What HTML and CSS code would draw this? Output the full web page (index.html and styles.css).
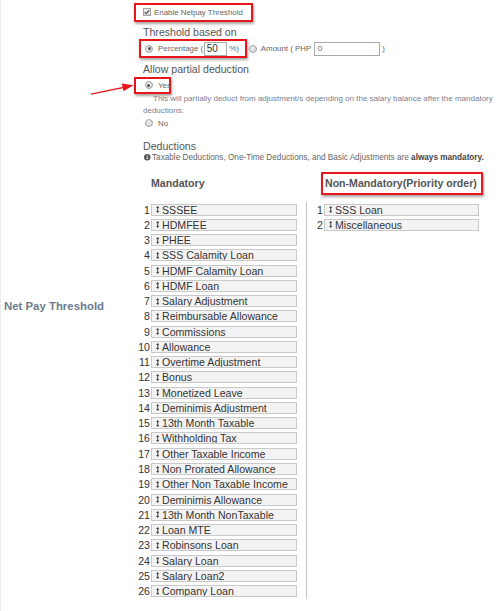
FILE: index.html
```html
<!DOCTYPE html>
<html>
<head>
<meta charset="utf-8">
<title>Net Pay Threshold</title>
<link rel="stylesheet" href="styles.css">
</head>
<body>
<div class="page">
  <div class="form-row">
    <div class="row-label">Net Pay Threshold</div>
    <div class="row-body">
      <div class="line-enable">
        <label class="annot annot-enable">
          <span class="cb"><svg viewBox="0 0 8 8" width="6" height="6"><path d="M1 4.2 L3 6.2 L7 1.5" fill="none" stroke="#555" stroke-width="1.5"/></svg></span>
          <span class="small enable-text">Enable Netpay Threshold</span>
        </label>
      </div>
      <div class="heading">Threshold based on</div>
      <div class="line-basis">
        <span class="annot annot-basis">
          <span class="radio checked"></span>
          <span class="small lbl-pct">Percentage (</span>
          <span class="input input-pct">50</span>
          <span class="small lbl-close">%)</span>
        </span>
        <span class="radio radio-amt"></span>
        <span class="small lbl-amt">Amount ( PHP</span>
        <span class="input input-amt">0</span>
        <span class="small lbl-close2">)</span>
      </div>
      <div class="heading heading-partial">Allow partial deduction</div>
      <div class="line-yes">
        <span class="annot annot-yes">
          <span class="radio checked"></span>
          <span class="small lbl-yes">Yes</span>
        </span>
      </div>
      <p class="help">This will partially deduct from adjustment/s depending on the salary balance after the mandatory deductions.</p>
      <div class="line-no">
        <span class="radio radio-no"></span>
        <span class="small lbl-no">No</span>
      </div>
      <div class="heading heading-deductions">Deductions</div>
      <div class="info">
        <svg class="info-icon" viewBox="0 0 10 10" width="6.5" height="6.5"><circle cx="5" cy="5" r="5" fill="#555"/><rect x="4.2" y="4.2" width="1.6" height="3.8" fill="#fff"/><rect x="4.2" y="2" width="1.6" height="1.5" fill="#fff"/></svg>
        <span>Taxable Deductions, One-Time Deductions, and Basic Adjustments are <b>always mandatory.</b></span>
      </div>
      <div class="columns">
        <div class="col-head mand-head">Mandatory</div>
        <div class="col-head nonmand-head"><span class="annot annot-head">Non-Mandatory(Priority order)</span></div>
        <ol class="sort-list list-left">
          <li><span class="num">1</span><span class="box"><svg class="sort" viewBox="0 0 4 8" width="3.5" height="7"><path d="M2 0 L4 2.4 H0 Z M2 8 L0 5.6 H4 Z M1.4 2 H2.6 V6 H1.4 Z" fill="#444"/></svg>SSSEE</span></li>
          <li><span class="num">2</span><span class="box"><svg class="sort" viewBox="0 0 4 8" width="3.5" height="7"><path d="M2 0 L4 2.4 H0 Z M2 8 L0 5.6 H4 Z M1.4 2 H2.6 V6 H1.4 Z" fill="#444"/></svg>HDMFEE</span></li>
          <li><span class="num">3</span><span class="box"><svg class="sort" viewBox="0 0 4 8" width="3.5" height="7"><path d="M2 0 L4 2.4 H0 Z M2 8 L0 5.6 H4 Z M1.4 2 H2.6 V6 H1.4 Z" fill="#444"/></svg>PHEE</span></li>
          <li><span class="num">4</span><span class="box"><svg class="sort" viewBox="0 0 4 8" width="3.5" height="7"><path d="M2 0 L4 2.4 H0 Z M2 8 L0 5.6 H4 Z M1.4 2 H2.6 V6 H1.4 Z" fill="#444"/></svg>SSS Calamity Loan</span></li>
          <li><span class="num">5</span><span class="box"><svg class="sort" viewBox="0 0 4 8" width="3.5" height="7"><path d="M2 0 L4 2.4 H0 Z M2 8 L0 5.6 H4 Z M1.4 2 H2.6 V6 H1.4 Z" fill="#444"/></svg>HDMF Calamity Loan</span></li>
          <li><span class="num">6</span><span class="box"><svg class="sort" viewBox="0 0 4 8" width="3.5" height="7"><path d="M2 0 L4 2.4 H0 Z M2 8 L0 5.6 H4 Z M1.4 2 H2.6 V6 H1.4 Z" fill="#444"/></svg>HDMF Loan</span></li>
          <li><span class="num">7</span><span class="box"><svg class="sort" viewBox="0 0 4 8" width="3.5" height="7"><path d="M2 0 L4 2.4 H0 Z M2 8 L0 5.6 H4 Z M1.4 2 H2.6 V6 H1.4 Z" fill="#444"/></svg>Salary Adjustment</span></li>
          <li><span class="num">8</span><span class="box"><svg class="sort" viewBox="0 0 4 8" width="3.5" height="7"><path d="M2 0 L4 2.4 H0 Z M2 8 L0 5.6 H4 Z M1.4 2 H2.6 V6 H1.4 Z" fill="#444"/></svg>Reimbursable Allowance</span></li>
          <li><span class="num">9</span><span class="box"><svg class="sort" viewBox="0 0 4 8" width="3.5" height="7"><path d="M2 0 L4 2.4 H0 Z M2 8 L0 5.6 H4 Z M1.4 2 H2.6 V6 H1.4 Z" fill="#444"/></svg>Commissions</span></li>
          <li><span class="num">10</span><span class="box"><svg class="sort" viewBox="0 0 4 8" width="3.5" height="7"><path d="M2 0 L4 2.4 H0 Z M2 8 L0 5.6 H4 Z M1.4 2 H2.6 V6 H1.4 Z" fill="#444"/></svg>Allowance</span></li>
          <li><span class="num">11</span><span class="box"><svg class="sort" viewBox="0 0 4 8" width="3.5" height="7"><path d="M2 0 L4 2.4 H0 Z M2 8 L0 5.6 H4 Z M1.4 2 H2.6 V6 H1.4 Z" fill="#444"/></svg>Overtime Adjustment</span></li>
          <li><span class="num">12</span><span class="box"><svg class="sort" viewBox="0 0 4 8" width="3.5" height="7"><path d="M2 0 L4 2.4 H0 Z M2 8 L0 5.6 H4 Z M1.4 2 H2.6 V6 H1.4 Z" fill="#444"/></svg>Bonus</span></li>
          <li><span class="num">13</span><span class="box"><svg class="sort" viewBox="0 0 4 8" width="3.5" height="7"><path d="M2 0 L4 2.4 H0 Z M2 8 L0 5.6 H4 Z M1.4 2 H2.6 V6 H1.4 Z" fill="#444"/></svg>Monetized Leave</span></li>
          <li><span class="num">14</span><span class="box"><svg class="sort" viewBox="0 0 4 8" width="3.5" height="7"><path d="M2 0 L4 2.4 H0 Z M2 8 L0 5.6 H4 Z M1.4 2 H2.6 V6 H1.4 Z" fill="#444"/></svg>Deminimis Adjustment</span></li>
          <li><span class="num">15</span><span class="box"><svg class="sort" viewBox="0 0 4 8" width="3.5" height="7"><path d="M2 0 L4 2.4 H0 Z M2 8 L0 5.6 H4 Z M1.4 2 H2.6 V6 H1.4 Z" fill="#444"/></svg>13th Month Taxable</span></li>
          <li><span class="num">16</span><span class="box"><svg class="sort" viewBox="0 0 4 8" width="3.5" height="7"><path d="M2 0 L4 2.4 H0 Z M2 8 L0 5.6 H4 Z M1.4 2 H2.6 V6 H1.4 Z" fill="#444"/></svg>Withholding Tax</span></li>
          <li><span class="num">17</span><span class="box"><svg class="sort" viewBox="0 0 4 8" width="3.5" height="7"><path d="M2 0 L4 2.4 H0 Z M2 8 L0 5.6 H4 Z M1.4 2 H2.6 V6 H1.4 Z" fill="#444"/></svg>Other Taxable Income</span></li>
          <li><span class="num">18</span><span class="box"><svg class="sort" viewBox="0 0 4 8" width="3.5" height="7"><path d="M2 0 L4 2.4 H0 Z M2 8 L0 5.6 H4 Z M1.4 2 H2.6 V6 H1.4 Z" fill="#444"/></svg>Non Prorated Allowance</span></li>
          <li><span class="num">19</span><span class="box"><svg class="sort" viewBox="0 0 4 8" width="3.5" height="7"><path d="M2 0 L4 2.4 H0 Z M2 8 L0 5.6 H4 Z M1.4 2 H2.6 V6 H1.4 Z" fill="#444"/></svg>Other Non Taxable Income</span></li>
          <li><span class="num">20</span><span class="box"><svg class="sort" viewBox="0 0 4 8" width="3.5" height="7"><path d="M2 0 L4 2.4 H0 Z M2 8 L0 5.6 H4 Z M1.4 2 H2.6 V6 H1.4 Z" fill="#444"/></svg>Deminimis Allowance</span></li>
          <li><span class="num">21</span><span class="box"><svg class="sort" viewBox="0 0 4 8" width="3.5" height="7"><path d="M2 0 L4 2.4 H0 Z M2 8 L0 5.6 H4 Z M1.4 2 H2.6 V6 H1.4 Z" fill="#444"/></svg>13th Month NonTaxable</span></li>
          <li><span class="num">22</span><span class="box"><svg class="sort" viewBox="0 0 4 8" width="3.5" height="7"><path d="M2 0 L4 2.4 H0 Z M2 8 L0 5.6 H4 Z M1.4 2 H2.6 V6 H1.4 Z" fill="#444"/></svg>Loan MTE</span></li>
          <li><span class="num">23</span><span class="box"><svg class="sort" viewBox="0 0 4 8" width="3.5" height="7"><path d="M2 0 L4 2.4 H0 Z M2 8 L0 5.6 H4 Z M1.4 2 H2.6 V6 H1.4 Z" fill="#444"/></svg>Robinsons Loan</span></li>
          <li><span class="num">24</span><span class="box"><svg class="sort" viewBox="0 0 4 8" width="3.5" height="7"><path d="M2 0 L4 2.4 H0 Z M2 8 L0 5.6 H4 Z M1.4 2 H2.6 V6 H1.4 Z" fill="#444"/></svg>Salary Loan</span></li>
          <li><span class="num">25</span><span class="box"><svg class="sort" viewBox="0 0 4 8" width="3.5" height="7"><path d="M2 0 L4 2.4 H0 Z M2 8 L0 5.6 H4 Z M1.4 2 H2.6 V6 H1.4 Z" fill="#444"/></svg>Salary Loan2</span></li>
          <li><span class="num">26</span><span class="box"><svg class="sort" viewBox="0 0 4 8" width="3.5" height="7"><path d="M2 0 L4 2.4 H0 Z M2 8 L0 5.6 H4 Z M1.4 2 H2.6 V6 H1.4 Z" fill="#444"/></svg>Company Loan</span></li>
        </ol>
        <ol class="sort-list list-right">
          <li><span class="num">1</span><span class="box"><svg class="sort" viewBox="0 0 4 8" width="3.5" height="7"><path d="M2 0 L4 2.4 H0 Z M2 8 L0 5.6 H4 Z M1.4 2 H2.6 V6 H1.4 Z" fill="#444"/></svg>SSS Loan</span></li>
          <li><span class="num">2</span><span class="box"><svg class="sort" viewBox="0 0 4 8" width="3.5" height="7"><path d="M2 0 L4 2.4 H0 Z M2 8 L0 5.6 H4 Z M1.4 2 H2.6 V6 H1.4 Z" fill="#444"/></svg>Miscellaneous</span></li>
        </ol>
      </div>
    </div>
  </div>
  <svg class="arrow" width="50" height="20" viewBox="88 80 50 20">
    <path d="M91 94.8 L123 88.3 L123.3 86.7 L91 93.4 Z" fill="#e8151b"/>
    <path d="M133.5 85.3 L121.9 83.6 L123.4 91.2 Z" fill="#e8151b"/>
  </svg>
</div>
</body>
</html>
```

FILE: styles.css
```css
* { box-sizing: border-box; }
html, body { margin: 0; padding: 0; background: #fff; }
body { font-family: "Liberation Sans", Arial, sans-serif; color: #555; }

.page {
  position: relative;
  width: 502px;
  height: 611px;
  border-left: 1px solid #ececec;
  overflow: hidden;
}

.form-row {
  display: flex;
  align-items: center;
  height: 611px;
}

.row-label {
  width: 142px;
  flex: none;
  padding-left: 3px;
  font-weight: bold;
  font-size: 11.4px;
  color: #6e7a8c;
}

.row-body {
  flex: 1;
  align-self: flex-start;
  min-width: 0;
}

.small { font-size: 7.9px; color: #666; white-space: nowrap; }

.annot {
  display: inline-flex;
  align-items: center;
  border: 2px solid #e8151b;
  box-shadow: 1px 1.5px 2.5px rgba(0, 0, 0, 0.35);
}

/* checkbox line */
.line-enable { height: 20px; padding-top: 1px; }
.annot-enable {
  height: 19px;
  width: 119px;
  margin-left: -9px;
  padding-left: 6.5px;
}
.cb {
  width: 8.5px;
  height: 8.5px;
  border: 1px solid #a5a5a5;
  background: linear-gradient(#eee, #d8d8d8);
  display: inline-flex;
  align-items: center;
  justify-content: center;
  flex: none;
}
.enable-text { margin-left: 3px; }

.heading {
  font-size: 10.6px;
  line-height: 14px;
  height: 14px;
  color: #555;
  margin-top: 5px;
}
.heading-partial { margin-top: 4px; }
.heading-deductions { margin-top: 9.5px; }

/* radios */
.radio {
  display: inline-block;
  width: 8px;
  height: 8px;
  border-radius: 50%;
  border: 1px solid #a2a2a2;
  background: radial-gradient(circle at 40% 35%, #f2f2f2, #d2d2d2);
  flex: none;
  position: relative;
}
.radio.checked::after {
  content: "";
  position: absolute;
  left: 1.5px;
  top: 1.5px;
  width: 3px;
  height: 3px;
  border-radius: 50%;
  background: #555;
}

.line-basis {
  display: flex;
  align-items: center;
  height: 19px;
}
.annot-basis {
  height: 19px;
  margin-left: -4px;
  padding-left: 4px;
  padding-right: 6px;
}
.lbl-pct { margin-left: 5px; }
.input {
  display: inline-flex;
  align-items: center;
  height: 14px;
  border: 1px solid #a9a9a9;
  background: #fff;
  flex: none;
}
.input-pct {
  width: 23px;
  margin-left: 1px;
  padding-left: 1.5px;
  font-size: 10px;
  color: #333;
}
.lbl-close { margin-left: 2px; }
.radio-amt { margin-left: 2px; }
.lbl-amt { margin-left: 4px; }
.input-amt {
  width: 66px;
  margin-left: 3px;
  padding-left: 2.5px;
  font-size: 8px;
  color: #666;
}
.lbl-close2 { margin-left: 2px; }

.line-yes { margin-top: -1px; height: 17px; }
.annot-yes {
  height: 17px;
  width: 37px;
  margin-left: -9px;
  padding-left: 8.5px;
  overflow: visible;
}
.lbl-yes { margin-left: 5.5px; }

.help {
  margin: 1px 0 0;
  font-size: 8px;
  line-height: 12px;
  text-indent: 10px;
  color: #7a8092;
  padding-right: 4px;
}

.line-no {
  display: flex;
  align-items: center;
  height: 12px;
}
.radio-no { margin-left: 1.5px; }
.lbl-no { margin-left: 5.5px; }

.info {
  display: flex;
  align-items: center;
  height: 10px;
  padding-left: 1px;
  font-size: 8.2px;
  color: #666;
  white-space: nowrap;
}
.info-icon { flex: none; margin-right: 1.5px; }
.info b { color: #444; }

/* columns */
.columns {
  display: grid;
  grid-template-columns: 169px 1fr;
  margin-left: -6px;
  margin-top: 9px;
}
.col-head {
  height: 23px;
  display: flex;
  align-items: center;
  font-size: 10.6px;
  font-weight: bold;
  color: #555;
}
.mand-head { padding-left: 14px; }
.nonmand-head { padding-left: 15px; }
.annot-head {
  height: 23px;
  width: 162px;
  padding-left: 2px;
  white-space: nowrap;
}

.sort-list {
  list-style: none;
  margin: 7px 0 0;
  padding: 2px 0 2px;
  display: flex;
  flex-direction: column;
  gap: 3.28px;
}
.sort-list li {
  display: grid;
  grid-template-columns: 13px 146px;
  column-gap: 1px;
  height: 12px;
  align-items: center;
}
.list-right {
  border-left: 1px solid #c6c6c6;
  padding-left: 3px;
}
.list-right li { grid-template-columns: 13px 155px; }

.num {
  text-align: right;
  font-size: 10.6px;
  line-height: 12px;
  color: #333;
}
.box {
  height: 12px;
  border: 1px solid #c9c9c9;
  background: #f3f3f3;
  display: flex;
  align-items: center;
  padding-left: 3.5px;
  font-size: 10.6px;
  line-height: 10px;
  color: #333;
  white-space: nowrap;
  overflow: hidden;
}
.sort { flex: none; margin-right: 3px; }

.arrow {
  position: absolute;
  left: 87px;
  top: 80px;
}
```
